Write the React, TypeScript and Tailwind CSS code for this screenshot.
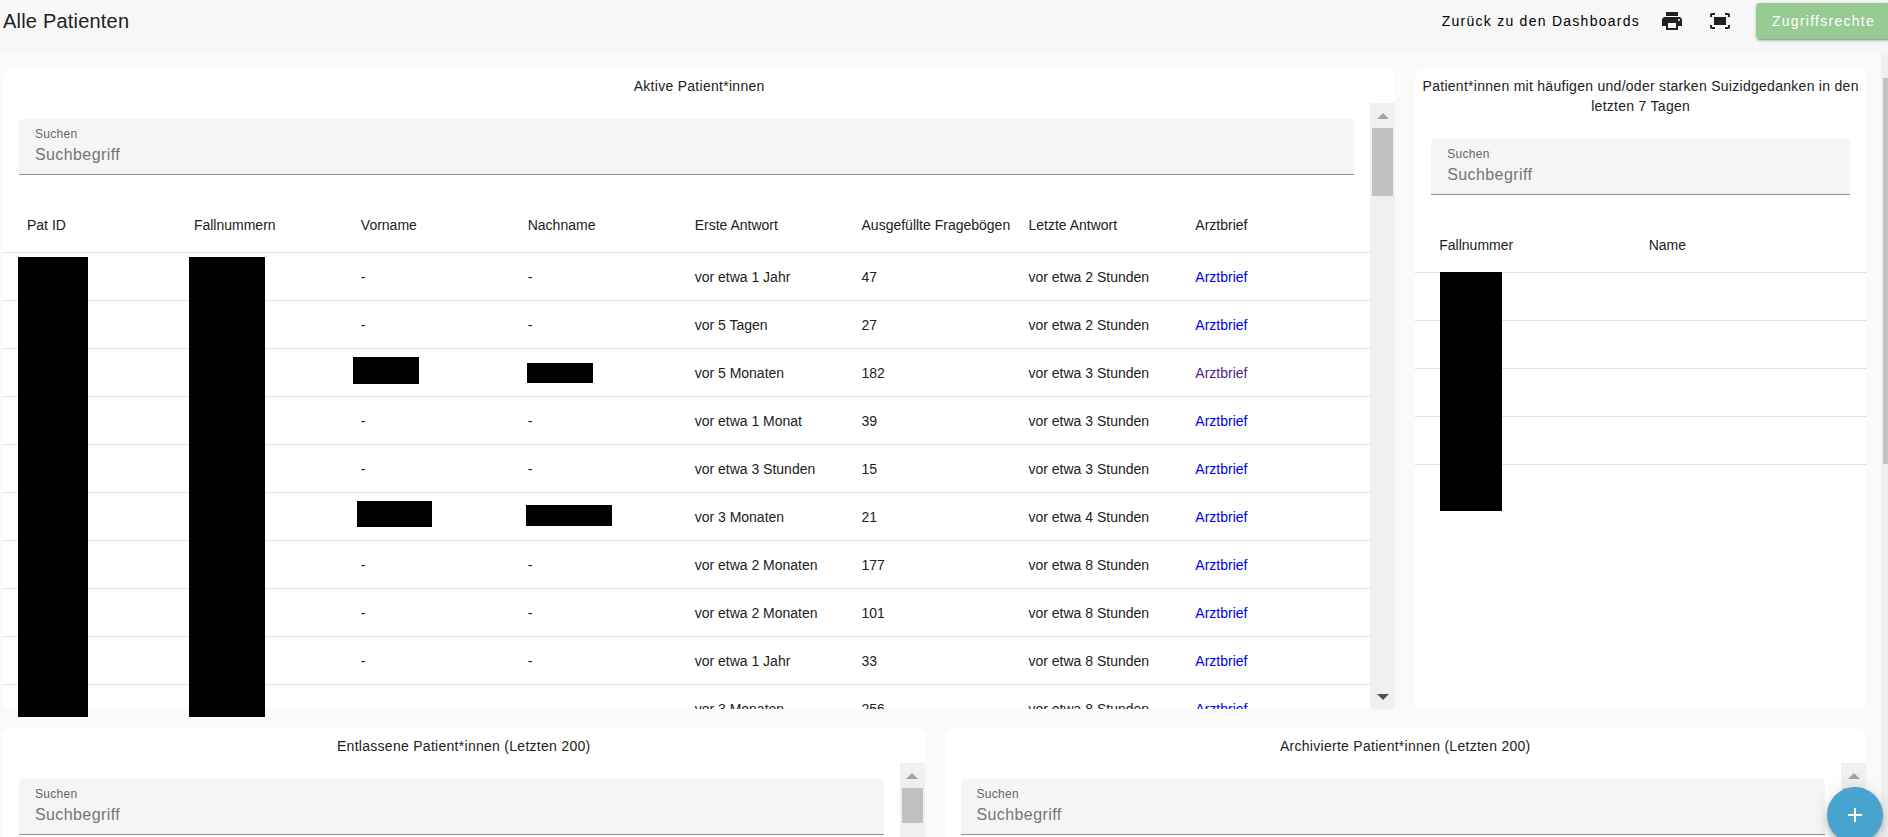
import React from "react";
import { MdAdd, MdFitScreen, MdPrint } from "react-icons/md";

interface Patient {
  vorname?: string;
  nachname?: string;
  ersteAntwort: string;
  frageboegen: number;
  letzteAntwort: string;
  visited?: boolean;
}

// vorname / nachname: classes of the black bar that hides the name
const patients: Patient[] = [
  { ersteAntwort: "vor etwa 1 Jahr", frageboegen: 47, letzteAntwort: "vor etwa 2 Stunden" },
  { ersteAntwort: "vor 5 Tagen", frageboegen: 27, letzteAntwort: "vor etwa 2 Stunden" },
  {
    vorname: "-left-2 top-2 h-[27px] w-[66px]",
    nachname: "-left-px top-3.5 h-5 w-[66px]",
    ersteAntwort: "vor 5 Monaten",
    frageboegen: 182,
    letzteAntwort: "vor etwa 3 Stunden",
    visited: true
  },
  { ersteAntwort: "vor etwa 1 Monat", frageboegen: 39, letzteAntwort: "vor etwa 3 Stunden" },
  { ersteAntwort: "vor etwa 3 Stunden", frageboegen: 15, letzteAntwort: "vor etwa 3 Stunden" },
  {
    vorname: "-left-1 top-2 h-[26px] w-[75px]",
    nachname: "-left-0.5 top-3 h-[21px] w-[86px]",
    ersteAntwort: "vor 3 Monaten",
    frageboegen: 21,
    letzteAntwort: "vor etwa 4 Stunden"
  },
  { ersteAntwort: "vor etwa 2 Monaten", frageboegen: 177, letzteAntwort: "vor etwa 8 Stunden" },
  { ersteAntwort: "vor etwa 2 Monaten", frageboegen: 101, letzteAntwort: "vor etwa 8 Stunden" },
  { ersteAntwort: "vor etwa 1 Jahr", frageboegen: 33, letzteAntwort: "vor etwa 8 Stunden" },
  { ersteAntwort: "vor 3 Monaten", frageboegen: 256, letzteAntwort: "vor etwa 8 Stunden" }
];

const columns = [
  "Pat ID",
  "Fallnummern",
  "Vorname",
  "Nachname",
  "Erste Antwort",
  "Ausgefüllte Fragebögen",
  "Letzte Antwort",
  "Arztbrief"
];

const SearchField: React.FC<{ id: string }> = ({ id }) => (
  <div className="mx-4 mt-4 mb-[22px] flex h-14 flex-col rounded-t border-b border-[#8e8e8e] bg-[#f5f5f5] px-4 pt-2">
    <label htmlFor={id} className="text-xs leading-[14px] tracking-wide text-[#666666]">
      Suchen
    </label>
    <input
      id={id}
      type="text"
      placeholder="Suchbegriff"
      className="h-7 w-full bg-transparent text-base tracking-wide outline-none placeholder:text-[#757575]"
    />
  </div>
);

const ScrollTrack: React.FC<{ thumb: string }> = ({ thumb }) => (
  <div className="flex w-[25px] shrink-0 flex-col items-center bg-[#f0f0f0]">
    <div className="flex h-[25px] items-center">
      <svg width="12" height="6" viewBox="0 0 12 6" fill="#a3a3a3">
        <path d="M6 0l6 6H0z" />
      </svg>
    </div>
    <div className={`w-[21px] bg-[#c1c1c1] ${thumb}`} />
    <div className="mt-auto flex h-[25px] items-center">
      <svg width="12" height="6" viewBox="0 0 12 6" fill="#505050">
        <path d="M6 6L0 0h12z" />
      </svg>
    </div>
  </div>
);

interface CardProps {
  id: string;
  title: string;
  span: string;
  thumb?: string;
  overlay?: React.ReactNode;
  children?: React.ReactNode;
}

const Card: React.FC<CardProps> = ({ id, title, span, thumb, overlay, children }) => (
  <section className={`relative flex h-[640px] flex-col rounded-md bg-white ${span}`}>
    <h2 className="px-1 py-[7px] text-center text-sm leading-5 tracking-[0.02em]">{title}</h2>
    <div className="flex min-h-0 flex-1 overflow-hidden">
      <div className="min-w-0 flex-1">
        <SearchField id={id} />
        {children}
      </div>
      {thumb && <ScrollTrack thumb={thumb} />}
    </div>
    {overlay}
  </section>
);

const HeadRow: React.FC<{ names: string[] }> = ({ names }) => (
  <thead className="block">
    <tr className="flex h-14 items-center border-b border-[#e0e0e0] pr-2 pl-6">
      {names.map((name) => (
        <th key={name} className="flex-1 text-left font-normal whitespace-nowrap">
          {name}
        </th>
      ))}
    </tr>
  </thead>
);

const NameCell: React.FC<{ bar?: string }> = ({ bar }) => (
  <td className="relative flex h-full flex-1 items-center">
    {bar ? <span className={`absolute bg-black ${bar}`} /> : "-"}
  </td>
);

const App: React.FC = () => {
  return (
    <div className="flex h-screen flex-col overflow-hidden bg-[#fafafa] font-['Liberation_Sans',Arial,sans-serif] text-[#212121]">
      <header className="flex h-[53px] shrink-0 items-start justify-between bg-[#f7f7f7] pt-[3px] pl-[3px]">
        <h1 className="text-xl leading-9 tracking-[0.01em]">Alle Patienten</h1>
        <div className="-mr-[3px] flex h-9 items-center">
          <a href="#dashboards" className="mr-5 text-sm tracking-[0.09em] text-black">
            Zurück zu den Dashboards
          </a>
          <button type="button" aria-label="Drucken" className="mr-6">
            <MdPrint size={24} />
          </button>
          <button type="button" aria-label="Vollbild" className="mr-6">
            <MdFitScreen size={24} />
          </button>
          <button
            type="button"
            className="h-9 rounded bg-[#97cb93] px-4 text-sm tracking-[0.09em] text-white shadow-[0_3px_1px_-2px_rgba(0,0,0,0.2),0_2px_2px_rgba(0,0,0,0.14),0_1px_5px_rgba(0,0,0,0.12)]"
          >
            Zugriffsrechte
          </button>
        </div>
      </header>

      <div className="flex min-h-0 flex-1">
        <main className="grid min-w-0 flex-1 grid-cols-12 content-start gap-5 overflow-hidden pt-4 pr-[15px] pl-[3px]">
          <Card
            id="suche-aktive"
            title="Aktive Patient*innen"
            span="col-span-9"
            thumb="h-[68px]"
            overlay={
              <>
                <div className="absolute top-[188px] left-[15px] h-[460px] w-[70px] bg-black" />
                <div className="absolute top-[188px] left-[186px] h-[460px] w-[76px] bg-black" />
              </>
            }
          >
            <table className="block text-sm">
              <HeadRow names={columns} />
              <tbody className="block">
                {patients.map((patient, index) => (
                  <tr key={index} className="flex h-12 items-center border-b border-[#e0e0e0] pr-2 pl-6">
                    <td className="flex-1" />
                    <td className="flex-1" />
                    <NameCell bar={patient.vorname} />
                    <NameCell bar={patient.nachname} />
                    <td className="flex-1">{patient.ersteAntwort}</td>
                    <td className="flex-1">{patient.frageboegen}</td>
                    <td className="flex-1">{patient.letzteAntwort}</td>
                    <td className="flex-1">
                      <a href="#arztbrief" className={patient.visited ? "text-[#551a8b]" : "text-[#0000ee]"}>
                        Arztbrief
                      </a>
                    </td>
                  </tr>
                ))}
              </tbody>
            </table>
          </Card>

          <Card
            id="suche-suizid"
            title="Patient*innen mit häufigen und/oder starken Suizidgedanken in den letzten 7 Tagen"
            span="col-span-3"
            overlay={<div className="absolute top-[203px] left-[25px] h-[239px] w-[62px] bg-black" />}
          >
            <table className="block text-sm">
              <HeadRow names={["Fallnummer", "Name"]} />
              <tbody className="block">
                {[1, 2, 3, 4, 5].map((row) => (
                  <tr key={row} className="flex h-12 border-b border-[#e0e0e0] pr-2 pl-6 last:border-b-0">
                    <td className="flex-1" />
                    <td className="flex-1" />
                  </tr>
                ))}
              </tbody>
            </table>
          </Card>

          <Card
            id="suche-entlassene"
            title="Entlassene Patient*innen (Letzten 200)"
            span="col-span-6"
            thumb="h-[35px]"
          />
          <Card
            id="suche-archivierte"
            title="Archivierte Patient*innen (Letzten 200)"
            span="col-span-6"
            thumb="h-[35px]"
          />
        </main>

        {/* Scrollleiste der Seite */}
        <div className="w-[7px] shrink-0 bg-[#f0f0f0] pt-[25px] pl-0.5">
          <div className="h-[386px] bg-[#c1c1c1]" />
        </div>
      </div>

      <button
        type="button"
        aria-label="Hinzufügen"
        className="fixed right-[5px] -bottom-1.5 flex size-14 items-center justify-center rounded-full bg-[#48a3cf] text-white shadow-[0_3px_5px_-1px_rgba(0,0,0,0.2),0_6px_10px_rgba(0,0,0,0.14),0_1px_18px_rgba(0,0,0,0.12)]"
      >
        <MdAdd size={24} />
      </button>
    </div>
  );
};

export default App;
